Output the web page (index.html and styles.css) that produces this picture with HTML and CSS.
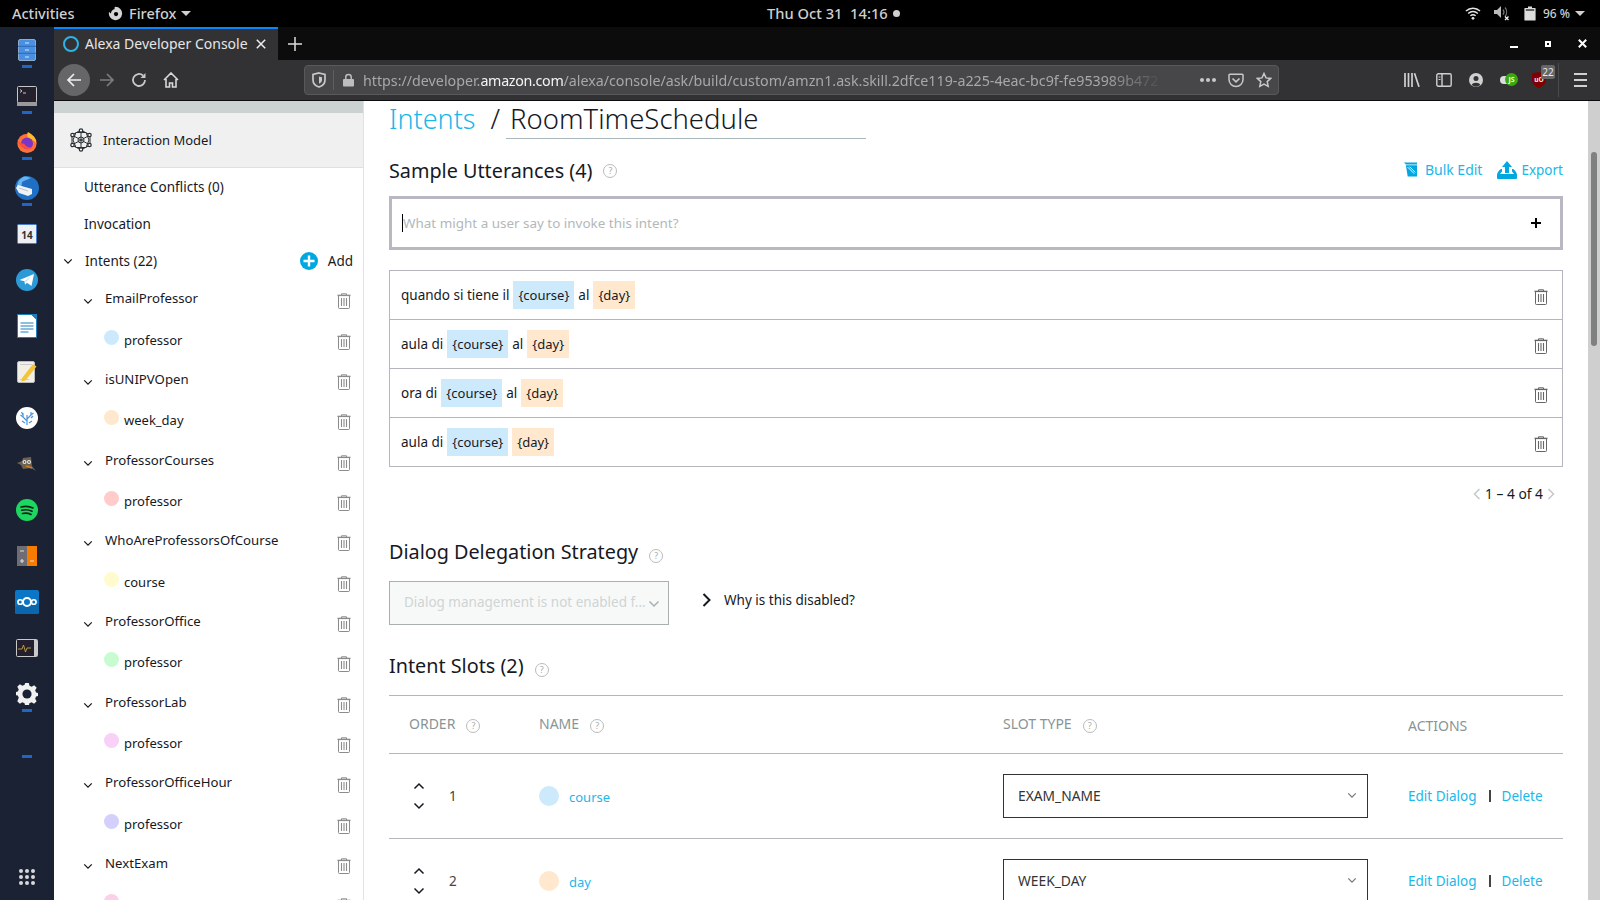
FILE: index.html
```html
<!DOCTYPE html>
<html lang="en">
<head>
<meta charset="utf-8">
<title>Alexa Developer Console</title>
<link rel="stylesheet" href="styles.css">
</head>
<body>
<svg class="defs" width="0" height="0" aria-hidden="true">
  <symbol id="trash" viewBox="0 0 14 16"><path d="M4.500 2V.8h5V2M1.500 2.600v12a.9.9 0 0 0 .9.9h9.200a.9.9 0 0 0 .9-.9V2.600" fill="none" stroke="currentColor" stroke-width="1"/><path d="M.5 1.700h13v1.400H.5z" fill="currentColor"/><path d="M4.500 5v8M7 5v8M9.500 5v8" stroke="currentColor" stroke-width="1.100"/></symbol>
  <symbol id="chev" viewBox="0 0 12 8"><path d="M1.500 1.500 6 6l4.500-4.500" fill="none" stroke="currentColor" stroke-width="1.500"/></symbol>
</svg>
<div class="screen">
  <header class="topbar">
    <div class="top-left">
      <span class="activities">Activities</span>
      <span class="appmenu">
        <svg class="ff-mini" viewBox="0 0 14 14"><path d="M7 .8a6.200 6.200 0 1 1-6 4.600c.4.800 1 1.300 1.700 1.500C2.900 4.600 4.500 3 6.400 2.700 5.700 2 6 1.200 7 .8z" fill="#d4d4d4"/><circle cx="7.500" cy="7.500" r="2" fill="#000"/></svg>
        Firefox<i class="caret"></i>
      </span>
    </div>
    <div class="clock">Thu Oct 31&nbsp; 14:16<i class="clock-dot"></i></div>
    <div class="top-right">
      <svg class="tray-wifi" viewBox="0 0 16 14"><path d="M1 5a10 10 0 0 1 14 0M3.200 7.500a7 7 0 0 1 9.600 0M5.400 9.800a4 4 0 0 1 5.200 0" fill="none" stroke="#e6e6e6" stroke-width="1.500"/><circle cx="8" cy="12.300" r="1.400" fill="#e6e6e6"/></svg>
      <svg class="tray-vol" viewBox="0 0 17 16"><path d="M1 5h3l4-4v12L4 9H1z" fill="#bbb"/><path d="M10 4.500a4 4 0 0 1 0 5M12 2.500a7 7 0 0 1 0 9" fill="none" stroke="#777" stroke-width="1.200"/><path d="M12 11.500l3.500 3.500M15.500 11.500 12 15" stroke="#eee" stroke-width="1.300"/></svg>
      <svg class="tray-bat" viewBox="0 0 12 15"><path d="M4 .5h4V2h3a.6.6 0 0 1 .6.6v11.300a.6.6 0 0 1-.6.6H1a.6.6 0 0 1-.6-.6V2.600A.6.6 0 0 1 1 2h3z" fill="#ddd"/><path d="M1.800 3.400h8.400v1.200H1.800z" fill="#111"/></svg>
      <span class="percent">96 %</span><i class="caret"></i>
    </div>
  </header>
  <div class="desk">
    <nav class="dock">
      <div class="dock-item run"><svg class="d22" viewBox="0 0 18 22"><rect width="17" height="21" x=".5" y=".5" rx="1.500" fill="#4a90e2" stroke="#cfe0f5" stroke-width=".6"/><path d="M0 7.300h18M0 14.300h18" stroke="#2c69b5"/><path d="M7 4h4M7 11h4M7 18h4" stroke="#d7e6f8"/></svg></div>
      <div class="dock-item run"><svg class="d20" viewBox="0 0 20 20"><rect width="19" height="16" x=".5" y=".5" rx="1" fill="#24202e" stroke="#c6c6c6"/><rect y="16" width="20" height="4" fill="#9a9a9a"/><path d="M3 3.500l2 1.500-2 1.500M6 7h3" stroke="#eee" fill="none" stroke-width=".8"/></svg></div>
      <div class="dock-item run"><svg class="d22" viewBox="0 0 24 24"><circle cx="12" cy="13.500" r="10.500" fill="#ff7139"/><path d="M13 1c5 3 9 6 9 12-3-4-7-4-9-6-1-2-1-4 0-6z" fill="#ffbd2e"/><circle cx="12" cy="13.500" r="6.500" fill="#7b35c9"/><path d="M2 11c2 8 11 11 17 7-5 1-9-1-10-4-3 0-5-1-7-3z" fill="#ff4f3a"/></svg></div>
      <div class="dock-item run"><svg viewBox="0 0 24 24"><circle cx="12" cy="12" r="12" fill="#1f6fc4"/><path d="M8 1C3 4 1 9 3 14c3-2 4-5 4-8 3-2 7-3 9-4-3-1-6-2-8-1z" fill="#66b4f0"/><path d="M3 9l14 4v5l-4 2L4 17 1 12z" fill="#eef1f5"/><path d="M4 12l9 3" stroke="#aab" stroke-width=".7"/></svg></div>
      <div class="dock-item"><svg class="d20" viewBox="0 0 20 20"><rect width="19" height="19" x=".5" y=".5" rx="1" fill="#eef0f4" stroke="#4a7fce"/><text x="10" y="14.500" text-anchor="middle" font-size="10" font-weight="700" font-family="Noto Sans" fill="#333">14</text></svg></div>
      <div class="dock-item"><svg class="d22" viewBox="0 0 22 22"><circle cx="11" cy="11" r="11" fill="#2b9ad6"/><path d="M3.500 11 18 5l-2.500 12-4.500-3.200-2 2-.5-3.500z" fill="#fff"/><path d="M8.500 12.300 15 7.500l-5 5.500z" fill="#c6dcec"/></svg></div>
      <div class="dock-item"><svg viewBox="0 0 20 24"><path d="M.5.500h14l5 5v18H.500z" fill="#fff" stroke="#1a7fc1"/><path d="M14 0h6v6z" fill="#1a7fc1"/><path d="M3.500 9h13M3.500 12h13M3.500 15h13M3.500 18h8" stroke="#1a7fc1" stroke-width="1.200"/></svg></div>
      <div class="dock-item"><svg class="d22" viewBox="0 0 20 22"><rect x=".5" y=".5" width="17" height="21" rx="1.500" fill="#f2f0e6" stroke="#bbb"/><path d="M3 3.500h12M3 18.500h9" stroke="#ccc"/><path d="M5 17 16 3l3.500 2.500-11 14-4 1z" fill="#f5c33b"/></svg></div>
      <div class="dock-item"><svg class="d22" viewBox="0 0 22 22"><circle cx="11" cy="11" r="11" fill="#fff"/><path d="M11 18V8M11 14 7 10V6M11 12l4-4V5M7 10 4.500 8M7 8 5.500 5M15 8l2.500-2M15 11l2-2M9 16l-3-2M13 16l3-2" stroke="#4c94d9" stroke-width="1.200" fill="none"/></svg></div>
      <div class="dock-item"><svg class="d20" viewBox="0 0 20 16"><path d="M0 7l5-2 1-3 8-1 1 9 4 5-5-3-8 1-2-4z" fill="#6d6252"/><circle cx="7.500" cy="6" r="2" fill="#e8e8e8"/><circle cx="12" cy="6" r="2" fill="#e8e8e8"/><circle cx="7.500" cy="6" r=".8" fill="#111"/><circle cx="12" cy="6" r=".8" fill="#111"/><path d="M9 10l6 2" stroke="#d47d1e" stroke-width="1.500"/></svg></div>
      <div class="dock-item"><svg class="d22" viewBox="0 0 22 22"><circle cx="11" cy="11" r="11" fill="#1ed760"/><path d="M5 8c4-1 8-1 12 1M5.700 11.300c3.500-.9 7-.7 10.300 1M6.500 14.500c3-.7 5.800-.5 8.500 1" fill="none" stroke="#10231a" stroke-width="1.600" stroke-linecap="round"/></svg></div>
      <div class="dock-item"><svg class="d20" viewBox="0 0 20 20"><rect width="10" height="20" fill="#6d6d73"/><rect x="10" width="10" height="20" fill="#f57c00"/><path d="M3 5h4M3 15h4M5 13v4M13 15h4" stroke="#ddd" stroke-width="1.200"/></svg></div>
      <div class="dock-item"><svg viewBox="0 0 24 24"><rect width="24" height="24" rx="2" fill="#0b76c5"/><path d="M0 17c8-4 14 1 24-4v9a2 2 0 0 1-2 2H2a2 2 0 0 1-2-2z" fill="#0a67ad"/><circle cx="12" cy="12" r="4" fill="none" stroke="#fff" stroke-width="2"/><circle cx="5.200" cy="12" r="2.300" fill="none" stroke="#fff" stroke-width="1.600"/><circle cx="18.800" cy="12" r="2.300" fill="none" stroke="#fff" stroke-width="1.600"/></svg></div>
      <div class="dock-item"><svg class="d22" viewBox="0 0 22 18"><rect x=".5" y=".5" width="21" height="17" rx="1" fill="#241f2e" stroke="#c9c9c9"/><rect x="18" y="1" width="3" height="16" fill="#c9c9c9"/><path d="M2 10h4l1.500-4 2 7 1.500-4h4" fill="none" stroke="#c2a63c" stroke-width=".9"/></svg></div>
      <div class="dock-item run"><svg class="d22" viewBox="0 0 24 24"><path d="M10 0h4l.7 3 2.400 1 2.700-1.600 2.800 2.800L20.900 8l1 2.400 3 .6v3l-3 .7-1 2.400 1.600 2.700-2.800 2.800-2.700-1.600-2.400 1-.6 3h-4l-.7-3-2.400-1-2.700 1.600-2.800-2.800L3 16.100 2 13.700l-3-.7v-3l3-.6 1-2.400-1.600-2.800 2.800-2.800L7 3l2.400-1z" fill="#f1f1f1"/><circle cx="12" cy="12" r="5" fill="#1a2234"/></svg></div>
      <div class="dock-item run"></div>
      <div class="dock-grid"><i></i><i></i><i></i><i></i><i></i><i></i><i></i><i></i><i></i></div>
    </nav>
    <div class="browser">
      <div class="tabbar">
        <div class="tab">
          <i class="alexa-ring"></i>
          <span class="tab-title">Alexa Developer Console</span>
          <svg class="tab-close" viewBox="0 0 10 10"><path d="M.8.800l8.400 8.400M9.200.8.800 9.200" stroke="#eee" stroke-width="1.500"/></svg>
        </div>
        <svg class="new-tab" viewBox="0 0 14 14"><path d="M7 0v14M0 7h14" stroke="#ddd" stroke-width="1.500"/></svg>
        <div class="winctl">
          <i class="win-min"></i><i class="win-max"></i>
          <svg class="win-close" viewBox="0 0 9 9"><path d="M.8.800l7.400 7.400M8.200.8.800 8.200" stroke="#fff" stroke-width="2"/></svg>
        </div>
      </div>
      <div class="toolbar">
        <span class="back"><svg viewBox="0 0 16 16"><path d="M15 8H2M8 2 2 8l6 6" fill="none" stroke="#eee" stroke-width="1.700"/></svg></span>
        <svg class="tb-ico dim" viewBox="0 0 16 16"><path d="M1 8h13M8 2l6 6-6 6" fill="none" stroke="#7c7c7e" stroke-width="1.700"/></svg>
        <svg class="tb-ico" viewBox="0 0 16 16"><path d="M14 8a6 6 0 1 1-2-4.500" fill="none" stroke="#c8c8c8" stroke-width="1.800"/><path d="M14.500 1v5h-5z" fill="#c8c8c8"/></svg>
        <svg class="tb-ico" viewBox="0 0 16 16"><path d="M1 8l7-7 7 7M3 7v8h3.500v-4h3v4H13V7" fill="none" stroke="#d8d8d8" stroke-width="1.600"/></svg>
        <div class="urlbar">
          <svg class="url-shield" viewBox="0 0 14 16"><path d="M7 1 13 2.500V8c0 3.500-3 6-6 7-3-1-6-3.500-6-7V2.500z" fill="none" stroke="#c8c8c8" stroke-width="1.700"/><path d="M7 4.500 10 5.200V8c0 1.700-1.300 3-3 3.700z" fill="#c8c8c8"/></svg>
          <i class="url-sep"></i>
          <svg class="url-lock" viewBox="0 0 12 14"><path d="M3 6V4a3 3 0 0 1 6 0v2" fill="none" stroke="#bdbdbd" stroke-width="1.600"/><rect y="6" width="12" height="8" rx="1" fill="#bdbdbd"/></svg>
          <div class="url-text">https://developer.<b>amazon.com</b>/alexa/console/ask/build/custom/amzn1.ask.skill.2dfce119-a225-4eac-bc9f-fe953989b472</div>
          <span class="url-more"><i></i><i></i><i></i></span>
          <svg class="url-pocket" viewBox="0 0 16 14"><path d="M1 1.500a.8.800 0 0 1 .8-.8h12.400a.8.800 0 0 1 .8.800V6a7 7 0 0 1-14 0z" fill="none" stroke="#c8c8c8" stroke-width="1.500"/><path d="M4.500 5 8 8.300 11.500 5" fill="none" stroke="#c8c8c8" stroke-width="1.700"/></svg>
          <svg class="url-star" viewBox="0 0 16 16"><path d="M8 1.500l2 4.400 4.700.5-3.500 3.200 1 4.700L8 12l-4.200 2.300 1-4.700L1.300 6.400 6 5.900z" fill="none" stroke="#c8c8c8" stroke-width="1.500"/></svg>
        </div>
        <div class="tb-right">
          <svg class="rt-ico" viewBox="0 0 16 14"><path d="M1 0v14M4.500 0v14M8 0v14M10.500.3l4.500 13.500" stroke="#d0d0d0" stroke-width="1.700" fill="none"/></svg>
          <svg class="rt-ico" viewBox="0 0 16 14"><rect x=".8" y=".8" width="14.400" height="12.400" rx="1.500" fill="none" stroke="#d0d0d0" stroke-width="1.400"/><path d="M6 1v12" stroke="#d0d0d0" stroke-width="1.400"/><path d="M2.500 4h2M2.500 6.500h2" stroke="#d0d0d0"/></svg>
          <svg class="rt-ico" viewBox="0 0 14 14"><circle cx="7" cy="7" r="7" fill="#d0d0d0"/><circle cx="7" cy="5.500" r="2.500" fill="#323234"/><path d="M2.800 12c.6-3 7.800-3 8.400 0a6 6 0 0 1-8.400 0z" fill="#323234"/></svg>
          <span class="js-toggle"><i class="js-track"></i><b class="js-knob">JS</b></span>
          <span class="ublock">
            <svg viewBox="0 0 14 16"><path d="M0 1.500 7 0l7 1.500V8c0 4-3.500 6.500-7 8-3.500-1.500-7-4-7-8z" fill="#800000"/><text x="7" y="9.800" text-anchor="middle" font-size="6.500" font-weight="700" font-family="Noto Sans" fill="#eee">uO</text></svg>
            <b class="badge">22</b>
          </span>
          <i class="tb-sep"></i>
          <span class="hamburger"><i></i><i></i><i></i></span>
        </div>
      </div>
      <div class="content">
        <aside class="sidebar">
          <div class="side-strip"></div>
          <div class="side-head">
            <svg class="model-ico" viewBox="0 0 22 24"><g fill="none" stroke="#2a2e33" stroke-width="1"><path d="M11 2 20 7v10l-9 5-9-5V7zM11 2v20M2 7l18 10M20 7 2 17M6 4.500 3 12l3 7.500h10l3-7.500-3-7.500z"/><circle cx="11" cy="12" r="3"/></g><g fill="#fff" stroke="#2a2e33" stroke-width="1.200"><circle cx="11" cy="2.500" r="1.700"/><circle cx="11" cy="21.500" r="1.700"/><circle cx="2.500" cy="7" r="1.700"/><circle cx="19.500" cy="7" r="1.700"/><circle cx="2.500" cy="17" r="1.700"/><circle cx="19.500" cy="17" r="1.700"/></g></svg>
            <span>Interaction Model</span>
          </div>
          <div class="side-link">Utterance Conflicts (0)</div>
          <div class="side-link">Invocation</div>
          <div class="side-intents">
            <svg class="chev"><use href="#chev"/></svg>
            <span class="intents-label">Intents (22)</span>
            <svg class="add-ico" viewBox="0 0 18 18"><circle cx="9" cy="9" r="9" fill="#00a8e1"/><path d="M9 3.500v11M3.500 9h11" stroke="#fff" stroke-width="2.400"/></svg>
            <span>Add</span>
          </div>
          <div class="tree">
            <div class="intent"><svg class="chev"><use href="#chev"/></svg><span>EmailProfessor</span><svg class="trash"><use href="#trash"/></svg></div>
            <div class="slot"><i class="dot c-blue"></i><span>professor</span><svg class="trash"><use href="#trash"/></svg></div>
            <div class="intent"><svg class="chev"><use href="#chev"/></svg><span>isUNIPVOpen</span><svg class="trash"><use href="#trash"/></svg></div>
            <div class="slot"><i class="dot c-orange"></i><span>week_day</span><svg class="trash"><use href="#trash"/></svg></div>
            <div class="intent"><svg class="chev"><use href="#chev"/></svg><span>ProfessorCourses</span><svg class="trash"><use href="#trash"/></svg></div>
            <div class="slot"><i class="dot c-red"></i><span>professor</span><svg class="trash"><use href="#trash"/></svg></div>
            <div class="intent"><svg class="chev"><use href="#chev"/></svg><span>WhoAreProfessorsOfCourse</span><svg class="trash"><use href="#trash"/></svg></div>
            <div class="slot"><i class="dot c-yellow"></i><span>course</span><svg class="trash"><use href="#trash"/></svg></div>
            <div class="intent"><svg class="chev"><use href="#chev"/></svg><span>ProfessorOffice</span><svg class="trash"><use href="#trash"/></svg></div>
            <div class="slot"><i class="dot c-green"></i><span>professor</span><svg class="trash"><use href="#trash"/></svg></div>
            <div class="intent"><svg class="chev"><use href="#chev"/></svg><span>ProfessorLab</span><svg class="trash"><use href="#trash"/></svg></div>
            <div class="slot"><i class="dot c-violet"></i><span>professor</span><svg class="trash"><use href="#trash"/></svg></div>
            <div class="intent"><svg class="chev"><use href="#chev"/></svg><span>ProfessorOfficeHour</span><svg class="trash"><use href="#trash"/></svg></div>
            <div class="slot"><i class="dot c-indigo"></i><span>professor</span><svg class="trash"><use href="#trash"/></svg></div>
            <div class="intent"><svg class="chev"><use href="#chev"/></svg><span>NextExam</span><svg class="trash"><use href="#trash"/></svg></div>
            <div class="slot"><i class="dot c-pink"></i><svg class="trash"><use href="#trash"/></svg></div>
          </div>
        </aside>
        <main class="main">
          <div class="title-row">
            <a class="crumb">Intents</a>
            <span class="slash">/</span>
            <span class="intent-name">RoomTimeSchedule</span>
          </div>
          <div class="sample-head">
            <h2 class="h2">Sample Utterances (4)</h2>
            <i class="help help-h">?</i>
            <a class="act bulk">
              <svg viewBox="0 0 14 15"><path d="M0 0h14v2H2z" fill="#00a8e1"/><path d="M2 3h12v12H4z" fill="#00a8e1"/><path d="M4 5l7 7M6 4.500l6 6" stroke="#fff" stroke-width="1"/></svg>
              Bulk Edit
            </a>
            <a class="act export">
              <svg viewBox="0 0 20 18"><path d="M10 0l5 6h-3v6H8V6H5z" fill="#00a8e1"/><path d="M0 14c0-2 2-5 4-6h1v2.500L3 13h14l-2-2.500V8h1c2 1 4 4 4 6v3a1 1 0 0 1-1 1H1a1 1 0 0 1-1-1z" fill="#00a8e1"/></svg>
              Export
            </a>
          </div>
          <div class="utter-input">
            <i class="cursor"></i>
            <span class="placeholder">What might a user say to invoke this intent?</span>
            <svg class="plus" viewBox="0 0 12 12"><path d="M6 1v10M1 6h10" stroke="#000" stroke-width="2"/></svg>
          </div>
          <div class="utter-list">
            <div class="utter">
              <span>quando si tiene il</span><span class="chip chip-b">{course}</span><span>al</span><span class="chip chip-o">{day}</span>
              <svg class="trash trash-dark"><use href="#trash"/></svg>
            </div>
            <div class="utter">
              <span>aula di</span><span class="chip chip-b">{course}</span><span>al</span><span class="chip chip-o">{day}</span>
              <svg class="trash trash-dark"><use href="#trash"/></svg>
            </div>
            <div class="utter">
              <span>ora di</span><span class="chip chip-b">{course}</span><span>al</span><span class="chip chip-o">{day}</span>
              <svg class="trash trash-dark"><use href="#trash"/></svg>
            </div>
            <div class="utter">
              <span>aula di</span><span class="chip chip-b">{course}</span><span class="chip chip-o">{day}</span>
              <svg class="trash trash-dark"><use href="#trash"/></svg>
            </div>
          </div>
          <div class="pager">
            <svg class="pg-l" viewBox="0 0 8 12"><path d="M6.500 1 1.500 6l5 5" fill="none" stroke="#c4c8c8" stroke-width="1.500"/></svg>
            <span>1 – 4 of 4</span>
            <svg class="pg-r" viewBox="0 0 8 12"><path d="M1.500 1l5 5-5 5" fill="none" stroke="#c4c8c8" stroke-width="1.500"/></svg>
          </div>
          <div class="dialog-head">
            <h2 class="h2">Dialog Delegation Strategy</h2>
            <i class="help help-low">?</i>
          </div>
          <div class="dialog-row">
            <div class="disabled-select">
              <span>Dialog management is not enabled f...</span>
              <svg class="sel-chev"><use href="#chev"/></svg>
            </div>
            <svg class="why-chev" viewBox="0 0 9 14"><path d="M1.500 1l6 6-6 6" fill="none" stroke="#16191f" stroke-width="2"/></svg>
            <span class="why">Why is this disabled?</span>
          </div>
          <div class="slots-head">
            <h2 class="h2">Intent Slots (2)</h2>
            <i class="help help-low">?</i>
          </div>
          <div class="slot-table">
            <div class="slot-row slot-head">
              <div class="col-order"><span>ORDER</span><i class="help">?</i></div>
              <div class="col-name"><span>NAME</span><i class="help">?</i></div>
              <div class="col-type"><span>SLOT TYPE</span><i class="help">?</i></div>
              <div class="col-actions"><span class="actions-label">ACTIONS</span></div>
            </div>
            <div class="slot-row">
              <div class="col-order">
                <span class="arrows"><svg class="up"><use href="#chev"/></svg><svg><use href="#chev"/></svg></span>
                <span class="num">1</span>
              </div>
              <div class="col-name"><i class="big-dot c-blue"></i><a class="link name-link">course</a></div>
              <div class="col-type"><div class="type-select"><span>EXAM_NAME</span><svg class="sel-chev"><use href="#chev"/></svg></div></div>
              <div class="col-actions"><a class="link">Edit Dialog</a><i class="pipe"></i><a class="link">Delete</a></div>
            </div>
            <div class="slot-row">
              <div class="col-order">
                <span class="arrows"><svg class="up"><use href="#chev"/></svg><svg><use href="#chev"/></svg></span>
                <span class="num">2</span>
              </div>
              <div class="col-name"><i class="big-dot c-orange"></i><a class="link name-link">day</a></div>
              <div class="col-type"><div class="type-select"><span>WEEK_DAY</span><svg class="sel-chev"><use href="#chev"/></svg></div></div>
              <div class="col-actions"><a class="link">Edit Dialog</a><i class="pipe"></i><a class="link">Delete</a></div>
            </div>
          </div>
        </main>
        <div class="scrollbar"><i class="thumb"></i></div>
      </div>
    </div>
  </div>
</div>
</body>
</html>
```

FILE: styles.css
```css
* { box-sizing: border-box; }
html, body { margin: 0; height: 100%; overflow: hidden; }
body { font-family: "Noto Sans", "Open Sans", sans-serif; font-size: 14px; color: #16191f; background: #000; }
i { display: block; font-style: normal; }
svg { display: block; flex: none; }
.defs { position: absolute; }
.screen { width: 1600px; height: 900px; display: flex; flex-direction: column; overflow: hidden; }

/* GNOME top bar */
.topbar { height: 27px; flex: none; background: #000; color: #cfcfcf; display: flex; align-items: center; padding-bottom: 1px; font-size: 14.5px; font-weight: 500; }
.top-left { width: 767px; display: flex; align-items: center; padding-left: 12px; flex: none; }
.activities { width: 96px; }
.appmenu { display: flex; align-items: center; gap: 6px; }
.ff-mini { width: 15px; height: 15px; }
.caret { width: 0; height: 0; border-left: 5px solid transparent; border-right: 5px solid transparent; border-top: 5px solid #d0d0d0; }
.appmenu .caret { margin-left: -1px; }
.clock { display: flex; align-items: center; gap: 5px; white-space: pre; font-size: 14.7px; }
.clock-dot { width: 7px; height: 7px; border-radius: 50%; background: #d0d0d0; }
.top-right { margin-left: auto; display: flex; align-items: center; padding-right: 15px; }
.tray-wifi { width: 16px; height: 14px; }
.tray-vol { width: 17px; height: 16px; margin-left: 12px; }
.tray-bat { width: 12px; height: 15px; margin-left: 14px; }
.percent { font-size: 12px; margin-left: 7px; margin-right: 5px; }

.desk { flex: 1; display: flex; min-height: 0; }

/* dock */
.dock { width: 54px; flex: none; background: #1a2234; display: flex; flex-direction: column; align-items: center; }
.dock-item { width: 100%; height: 46px; flex: none; display: flex; justify-content: center; padding-top: 11px; position: relative; }
.dock-item svg { height: 24px; width: 24px; }
.dock-item svg.d22 { height: 22px; width: 22px; margin-top: 1px; }
.dock-item svg.d20 { height: 20px; width: 20px; margin-top: 2px; }
.dock-item.run::after { content: ""; position: absolute; left: 22px; bottom: 5px; width: 10px; height: 3px; background: #1f66c7; }
.dock-grid { margin-top: auto; margin-bottom: 15px; display: grid; grid-template-columns: repeat(3, 4px); gap: 2px; }
.dock-grid i { width: 4px; height: 4px; border-radius: 50%; background: #d8d8d8; }

/* browser chrome */
.browser { flex: 1; min-width: 0; display: flex; flex-direction: column; }
.tabbar { height: 33px; flex: none; background: #0c0c0d; display: flex; align-items: center; }
.tab { width: 224px; height: 33px; background: #323234; border-top: 2px solid #0a84ff; padding-bottom: 2px; display: flex; align-items: center; padding-left: 9px; color: #e6e6e6; font-size: 14px; }
.alexa-ring { width: 16px; height: 16px; border-radius: 50%; border: 2px solid #2fb3e6; }
.tab-title { margin-left: 6px; white-space: nowrap; }
.tab-close { width: 10px; height: 10px; margin-left: auto; margin-right: 12px; }
.new-tab { width: 14px; height: 14px; margin-left: 10px; }
.winctl { margin-left: auto; display: flex; align-items: center; padding-right: 13px; }
.win-min { width: 8px; height: 2px; background: #fff; margin-top: 6px; }
.win-max { width: 6px; height: 6px; border: 2px solid #fff; margin-left: 27px; }
.win-close { width: 9px; height: 9px; margin-left: 27px; }

.toolbar { height: 41px; flex: none; background: #323234; border-bottom: 1px solid #0c0c0d; display: flex; align-items: center; padding-left: 4px; }
.back { width: 32px; height: 32px; border-radius: 50%; background: #666668; display: flex; align-items: center; justify-content: center; }
.back svg { width: 16px; height: 16px; }
.tb-ico { width: 16px; height: 16px; margin-left: 16px; }
.tb-ico.dim { margin-left: 9px; }
.urlbar { width: 975px; height: 30px; margin-left: 125px; background: #474749; border: 1px solid #59595b; border-radius: 4px; display: flex; align-items: center; color: #a8a8aa; font-size: 14.25px; }
.url-shield { width: 14px; height: 16px; margin-left: 7px; }
.url-sep { width: 1px; height: 20px; background: #5f5f61; margin-left: 7px; }
.url-lock { width: 11px; height: 14px; margin-left: 9px; }
.url-text { width: 805px; margin-left: 9px; white-space: nowrap; overflow: hidden; -webkit-mask-image: linear-gradient(to right, #000 92%, transparent 99.5%); mask-image: linear-gradient(to right, #000 92%, transparent 99.5%); }
.url-text b { color: #f4f4f4; font-weight: 400; letter-spacing: -.3px; }
.url-more { display: flex; gap: 2px; margin-left: auto; }
.url-more i { width: 4px; height: 4px; border-radius: 50%; background: #c8c8c8; }
.url-pocket { width: 16px; height: 15px; margin-left: 12px; }
.url-star { width: 16px; height: 16px; margin-left: 12px; margin-right: 6px; }
.tb-right { flex: 1; display: flex; align-items: center; padding-left: 125px; }
.rt-ico { width: 16px; height: 14px; margin-right: 16px; }
.js-toggle { width: 18px; height: 12px; position: relative; margin-right: 14px; }
.js-track { position: absolute; left: 0; top: 2px; width: 16px; height: 8px; border-radius: 4px; background: #dcdcdc; }
.js-knob { position: absolute; left: 5px; top: -1px; width: 13px; height: 13px; border-radius: 50%; background: #3aa80f; color: #e8ffe0; font-size: 7px; line-height: 13px; text-align: center; }
.ublock { width: 14px; height: 16px; position: relative; }
.ublock svg { width: 14px; height: 16px; }
.badge { position: absolute; left: 9px; top: -7px; width: 14px; height: 14px; background: #666; border-radius: 2px; color: #e8e8e8; font-size: 10px; line-height: 14px; font-weight: 400; text-align: center; }
.tb-sep { width: 1px; height: 34px; background: #4a4a4c; margin-left: 12px; }
.hamburger { display: grid; gap: 4px; margin-left: 15px; }
.hamburger i { width: 13px; height: 2px; background: #d0d0d0; }

/* page */
.content { flex: 1; min-height: 0; display: flex; background: #fff; }
.sidebar { width: 310px; flex: none; border-right: 1px solid #dfe3e3; overflow: hidden; font-size: 13.5px; }
.side-strip { height: 12px; background: #ccd1d1; }
.side-head { height: 55px; background: #f0f0f0; border-bottom: 1px solid #e0e0e0; display: flex; align-items: center; padding-left: 16px; gap: 11px; font-size: 13px; }
.model-ico { width: 22px; height: 24px; }
.side-link { height: 37.5px; display: flex; align-items: center; padding-left: 30px; }
.side-intents { height: 38px; display: flex; align-items: center; padding: 0 10px 2px 9px; }
.chev { width: 10px; height: 7px; color: #16191f; }
.intents-label { margin-left: 12px; margin-right: auto; }
.add-ico { width: 18px; height: 18px; margin-right: 10px; }
.intent, .slot { height: 40.35px; display: flex; align-items: center; padding-right: 12px; }
.intent { padding-left: 29px; font-size: 13.2px; }
.intent span { margin-left: 12px; margin-bottom: 6px; }
.intent .chev { margin-top: 1px; }
.slot { padding-left: 50px; font-size: 13px; }
.slot span { margin-left: 5px; margin-bottom: 4px; }
.dot { width: 15px; height: 15px; border-radius: 50%; margin-bottom: 9px; }
.trash { width: 14px; height: 16px; color: #8b8b8b; margin-left: auto; }
.c-blue { background: #cdeafd; }
.c-orange { background: #ffe8cd; }
.c-red { background: #ffcbcb; }
.c-yellow { background: #fffbcf; }
.c-green { background: #c9fbd0; }
.c-violet { background: #f8d0f8; }
.c-indigo { background: #d3d0fb; }
.c-pink { background: #fbd0e8; }

.main { flex: 1; min-width: 0; padding: 0 23px 0 25px; overflow: hidden; }
.title-row { height: 37px; display: flex; align-items: flex-end; font-size: 27.5px; font-weight: 300; }
.crumb { color: #1ab7ea; font-size: 27px; line-height: 35px; margin-bottom: 2px; }
.slash { line-height: 35px; margin-bottom: 2px; margin-left: 15px; }
.intent-name { width: 360px; margin-left: 6px; padding-left: 4px; line-height: 35px; height: 38px; margin-bottom: -1px; border-bottom: 1px solid #a9b8bc; }
.h2 { margin: 0; font-size: 19.8px; font-weight: 400; line-height: 30px; white-space: nowrap; }
.sample-head { height: 58px; display: flex; align-items: center; padding-top: 7px; }
.help { width: 14px; height: 14px; flex: none; border: 1px solid #b8bcbc; border-radius: 50%; color: #a8acac; font-size: 9px; line-height: 12px; text-align: center; font-weight: 400; }
.help-h { margin-left: 11px; margin-top: 1px; }
.act { color: #1ab7ea; display: flex; align-items: center; font-size: 14px; margin-top: -2px; }
.bulk { margin-left: auto; gap: 8px; }
.bulk svg { width: 13px; height: 15px; }
.export { margin-left: 15px; gap: 4px; font-size: 13.5px; margin-top: -1px; }
.export svg { width: 20px; height: 18px; }
.utter-input { height: 54px; border: 3px solid #b8b8c2; display: flex; align-items: center; padding: 0 18px 0 10px; }
.cursor { width: 1px; height: 18px; background: #000; }
.placeholder { color: #b3b8bb; font-size: 13.45px; }
.plus { width: 12px; height: 12px; margin-left: auto; }
.utter-list { margin-top: 20px; border: 1px solid #b5b5bd; }
.utter { height: 49px; display: flex; align-items: center; padding: 0 14px 0 11px; gap: 4px; border-top: 1px solid #b5b5bd; font-size: 13.5px; }
.utter:first-child { height: 48px; border-top: 0; }
.chip { height: 28px; padding: 0 5px; display: flex; align-items: center; font-size: 13px; }
.chip-b { background: #cdeafd; }
.chip-o { background: #ffe8cd; }
.trash-dark { color: #666; margin-top: 3px; }
.pager { height: 53px; display: flex; align-items: center; justify-content: flex-end; gap: 4px; padding-right: 13px; font-size: 13.8px; }
.pg-l, .pg-r { width: 8px; height: 12px; }
.pg-r { margin-right: -5px; }
.dialog-head { margin-top: 17px; height: 30px; display: flex; align-items: center; }
.help-low { margin-left: 11px; margin-top: 7px; }
.dialog-row { margin-top: 14px; height: 44px; display: flex; align-items: center; }
.disabled-select { width: 280px; height: 44px; background: #f7f9f9; border: 1px solid #aab0b0; display: flex; align-items: center; padding: 0 0 2px 14px; color: #cfd4d4; font-size: 13.5px; white-space: nowrap; }
.disabled-select .sel-chev { color: #aab0b0; width: 12px; height: 8px; margin-left: 2px; margin-top: 3px; }
.sel-chev { width: 10px; height: 7px; color: #777; }
.why-chev { width: 9px; height: 14px; margin-left: 33px; margin-bottom: 7px; }
.why { margin-left: 13px; margin-bottom: 7px; font-size: 13.5px; }
.slots-head { margin-top: 26px; height: 30px; display: flex; align-items: center; }
.slot-table { margin-top: 14px; border-top: 1px solid #b5b5bd; }
.slot-row { display: grid; grid-template-columns: 150px 464px 405px 1fr; height: 85px; border-bottom: 1px solid #b5b5bd; align-items: center; }
.slot-head { height: 58px; color: #879596; font-size: 14px; }
.slot-row > div { display: flex; align-items: center; }
.col-order { padding-left: 20px; }
.slot-head .help { margin-left: 11px; margin-top: 2px; }
.slot-head .col-order span, .slot-head .col-name span, .slot-head .col-type span { margin-bottom: 2px; }
.slot-head .col-actions .actions-label { margin-top: 2px; }
.arrows { width: 20px; display: flex; flex-direction: column; align-items: center; gap: 12px; }
.arrows svg { width: 12px; height: 8px; color: #16191f; }
.arrows .up { transform: rotate(180deg); }
.num { margin-left: 20px; margin-bottom: 1px; color: #444; font-size: 13.5px; }
.big-dot { width: 20px; height: 20px; border-radius: 50%; margin-right: 10px; }
.link { color: #1ab7ea; font-size: 13.5px; }
.name-link { font-size: 13px; margin-top: 1px; }
.type-select { width: 365px; height: 44px; border: 1px solid #333; display: flex; align-items: center; padding: 0 10px 0 14px; color: #333; font-size: 13.8px; margin-bottom: 1px; }
.type-select .sel-chev { margin-left: auto; }
.pipe { width: 2px; height: 12px; background: #444; margin: 0 11px 0 12px; }
.scrollbar { width: 14px; flex: none; background: #fff; display: flex; justify-content: flex-end; }
.thumb { width: 12px; background: #cfcfcf; position: relative; }
.thumb::after { content: ""; position: absolute; left: 3px; top: 51px; width: 6px; height: 194px; border-radius: 3px; background: #7f8181; }
```
